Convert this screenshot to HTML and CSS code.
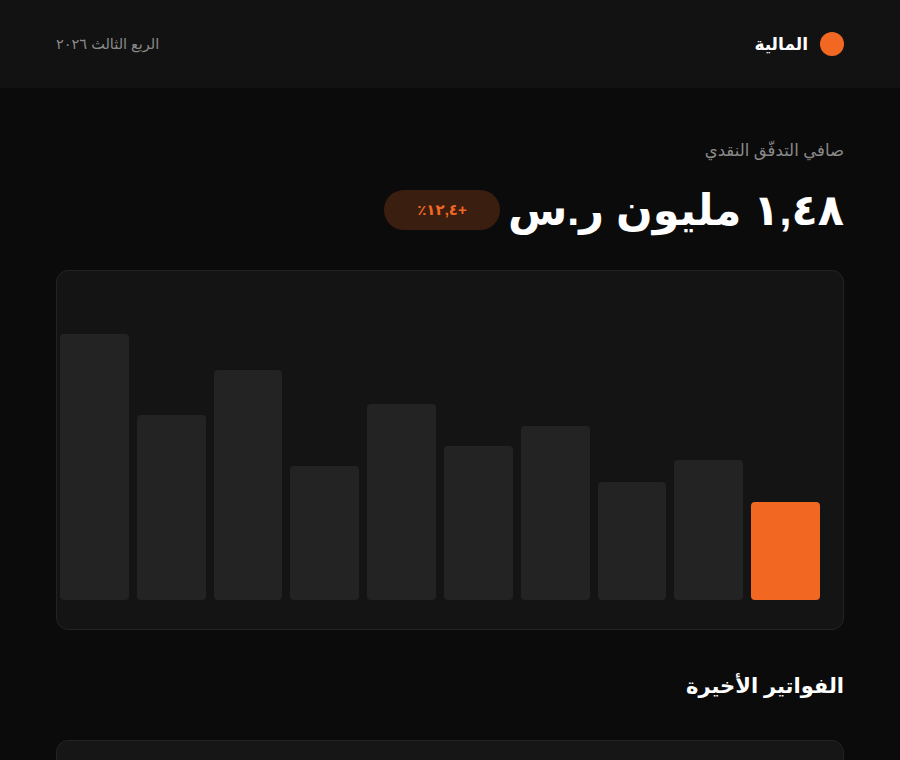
FILE: index.html
```html
<!DOCTYPE html>
<html lang="ar" dir="rtl">
<head>
<meta charset="utf-8">
<title>المالية</title>
<link rel="stylesheet" href="styles.css">
</head>
<body>
<header class="topbar">
  <div class="brand">
    <span class="brand-dot"></span>
    <span class="brand-name">المالية</span>
  </div>
  <div class="period">الربع الثالث ٢٠٢٦</div>
</header>
<main class="content">
  <section class="summary">
    <div class="summary-label">صافي التدفّق النقدي</div>
    <div class="summary-row">
      <div class="summary-value">١,٤٨ مليون ر.س</div>
      <div class="badge">+١٢,٤٪</div>
    </div>
  </section>
  <section class="chart-card">
    <div class="bars">
      <div class="bar bar-accent" style="height:35%"></div>
      <div class="bar" style="height:50%"></div>
      <div class="bar" style="height:42%"></div>
      <div class="bar" style="height:62%"></div>
      <div class="bar" style="height:55%"></div>
      <div class="bar" style="height:70%"></div>
      <div class="bar" style="height:48%"></div>
      <div class="bar" style="height:82%"></div>
      <div class="bar" style="height:66%"></div>
      <div class="bar" style="height:95%"></div>
    </div>
  </section>
  <h2 class="section-title">الفواتير الأخيرة</h2>
  <section class="list-card"></section>
</main>
</body>
</html>
```

FILE: styles.css
```css
html, body {
  margin: 0;
  padding: 0;
  background: #0b0b0b;
  color: #ffffff;
  font-family: "Liberation Sans", "DejaVu Sans", sans-serif;
  overflow: hidden;
}

.topbar {
  height: 88px;
  box-sizing: border-box;
  padding: 0 56px;
  background: #121212;
  display: flex;
  align-items: center;
  justify-content: space-between;
}

.brand {
  display: flex;
  align-items: center;
  gap: 12px;
}

.brand-dot {
  width: 24px;
  height: 24px;
  border-radius: 50%;
  background: #f26822;
}

.brand-name {
  font-size: 17px;
  font-weight: 700;
  color: #ffffff;
}

.period {
  font-size: 14.5px;
  color: #8a8a8a;
}

.content {
  padding: 50px 56px 0;
}

.summary-label {
  font-size: 16.5px;
  color: #8a8a8a;
  line-height: 24px;
}

.summary-row {
  display: flex;
  align-items: center;
  gap: 8px;
  margin-top: 22px;
}

.summary-value {
  font-size: 43px;
  font-weight: 700;
  line-height: 52px;
  color: #ffffff;
}

.badge {
  height: 40px;
  width: 116px;
  box-sizing: border-box;
  border-radius: 20px;
  background: #3a1e0f;
  color: #f26822;
  font-size: 15px;
  font-weight: 700;
  letter-spacing: 2px;
  display: flex;
  align-items: center;
  justify-content: center;
}

.chart-card {
  margin-top: 34px;
  height: 360px;
  box-sizing: border-box;
  border: 1px solid #232323;
  border-radius: 12px;
  background: #141414;
  padding: 49px 23px 29px 3px;
}

.bars {
  height: 280px;
  display: grid;
  grid-template-columns: repeat(10, 1fr);
  gap: 8px;
  align-items: end;
}

.bar {
  background: #232323;
  border-radius: 4px;
}

.bar-accent {
  background: #f26822;
}

.section-title {
  margin: 40px 0 0;
  font-size: 21px;
  font-weight: 700;
  line-height: 32px;
  color: #ffffff;
}

.list-card {
  margin-top: 38px;
  height: 200px;
  border: 1px solid #232323;
  border-radius: 12px;
  background: #161616;
}
```
